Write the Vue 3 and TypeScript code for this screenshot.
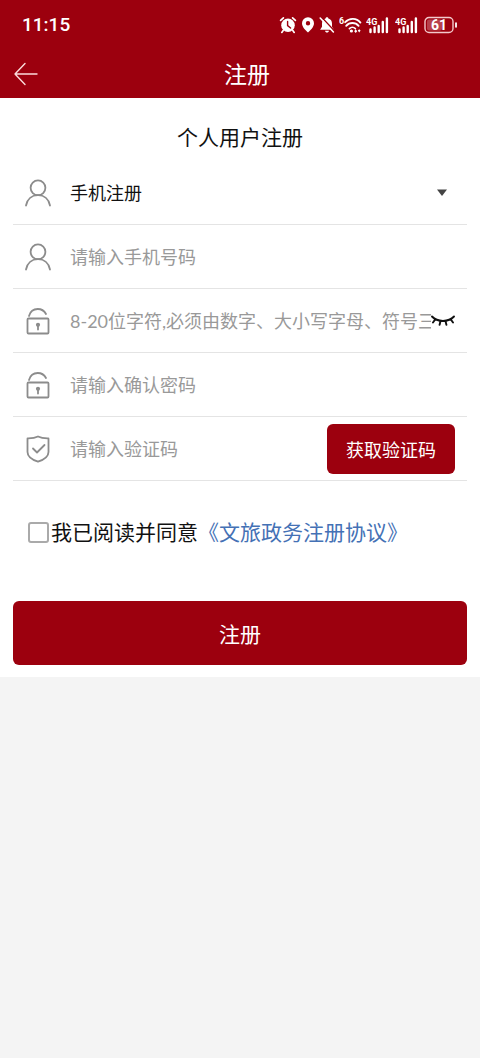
<script setup lang="ts">
import { ref } from 'vue'

const mode = ref('phone')
const phone = ref('')
const password = ref('')
const confirmation = ref('')
const code = ref('')
const agreed = ref(false)
const visible = ref(false)
</script>

<template>
  <div class="page">
    <header class="top">
      <div class="status">
        <span class="time">11:15</span>
        <div class="indicators">
          <svg width="18" height="18" viewBox="0 0 18 18" aria-hidden="true">
            <circle cx="9" cy="9.3" r="6.8" fill="#fff" />
            <path d="M1.600 4.400 4.400 1.800M16.400 4.400 13.600 1.800M4.200 14.600 2.800 16.400M13.800 14.600l1.400 1.800" stroke="#fff" stroke-width="1.700" stroke-linecap="round" />
            <path d="M8.600 5.400v4.200l3 2.400" fill="none" stroke="#9c000e" stroke-width="1.400" stroke-linecap="round" />
          </svg>
          <svg width="14" height="18" viewBox="0 0 14 18" aria-hidden="true">
            <path fill="#fff" fill-rule="evenodd" d="M7 1.200a6 6 0 0 0-6 6c0 4 4 7.300 6 9.300 2-2 6-5.300 6-9.300a6 6 0 0 0-6-6Zm0 3.800a2.200 2.200 0 1 1 0 4.400 2.200 2.200 0 0 1 0-4.400Z" />
          </svg>
          <svg width="16" height="18" viewBox="0 0 16 18" aria-hidden="true">
            <path fill="#fff" d="M8 1.300c.8 0 1.300.5 1.400 1.200 2.400.7 3.600 2.500 3.600 4.900v3.400l1.900 2.900H1.100L3 10.800V7.400c0-2.400 1.200-4.200 3.600-4.900.1-.7.600-1.200 1.400-1.200ZM6 14.700h4c-.2 1.200-1 1.800-2 1.800s-1.800-.6-2-1.800Z" />
            <path d="M2.600 1.200 16 15.600" stroke="#9c000e" stroke-width="1.500" />
            <path d="M1.200 2 14.400 16" stroke="#fff" stroke-width="1.600" stroke-linecap="round" />
          </svg>
          <svg width="23" height="18" viewBox="0 0 23 18" aria-hidden="true">
            <text x="0" y="7.500" class="mark">6</text>
            <path d="M6.200 6.200c4.200-4.600 11.400-4.400 15.200.4M7.200 9.800c3.200-3.700 9.200-3.700 12.400 0" fill="none" stroke="#fff" stroke-width="1.900" stroke-linecap="round" />
            <path d="M10.400 12.600c1.700-1.700 4.300-1.700 6 0" fill="none" stroke="#fff" stroke-width="1.600" stroke-linecap="round" />
            <circle cx="12.400" cy="15" r="1.600" fill="#fff" />
            <path d="m15.200 15.200 1.500-2 1.500 2-1.500 1.700ZM18.800 14.600l1.400-1.400 1.400 1.400-1.400 2Z" fill="#fff" />
          </svg>
          <svg v-for="sim in 2" :key="sim" width="25" height="18" viewBox="0 0 25 18" aria-hidden="true">
            <text x="0" y="8.500" class="mark">4G</text>
            <path d="M4.500 13.500V16M8.600 11.500V16M12.700 10V16M16.800 6V16M20.900 2.500V16" stroke="#fff" stroke-width="2.400" stroke-linecap="round" />
          </svg>
          <svg width="34" height="18" viewBox="0 0 34 18" aria-hidden="true">
            <rect x="1" y="1.500" width="28" height="15" rx="4" fill="none" stroke="#f3c9cc" stroke-width="1.400" />
            <rect x="3" y="3.500" width="15" height="11" rx="2" fill="#b8404b" />
            <path d="M32 7.200v3.600" stroke="#fff" stroke-width="1.800" stroke-linecap="round" />
            <text x="15" y="14" text-anchor="middle" class="charge">61</text>
          </svg>
        </div>
      </div>
      <nav class="bar">
        <button type="button" class="back" aria-label="返回">
          <svg width="24" height="24" viewBox="0 0 24 24" fill="none" stroke="#fbdcdc" stroke-width="1.400" stroke-linecap="round" stroke-linejoin="round">
            <path d="M23 12H1M11 1.500 1 12l10 10.500" />
          </svg>
        </button>
        <h1>注册</h1>
      </nav>
    </header>

    <form class="form" @submit.prevent>
      <h2>个人用户注册</h2>

      <div class="row">
        <svg class="icon" viewBox="0 0 28 28" aria-hidden="true"><circle cx="14" cy="8.800" r="7.400" /><path d="M2 26.500C3.200 20 8 16.200 14 16.200S24.800 20 26 26.500" /></svg>
        <div class="pick">
          <select v-model="mode" aria-label="注册方式">
            <option value="phone">手机注册</option>
          </select>
          <svg class="caret" width="10" height="7" viewBox="0 0 10 7" aria-hidden="true"><path d="M0 .5h10L5 7Z" fill="#444" /></svg>
        </div>
      </div>

      <div class="row">
        <svg class="icon" viewBox="0 0 28 28" aria-hidden="true"><circle cx="14" cy="8.800" r="7.400" /><path d="M2 26.500C3.200 20 8 16.200 14 16.200S24.800 20 26 26.500" /></svg>
        <input v-model="phone" type="tel" placeholder="请输入手机号码" aria-label="手机号码" />
      </div>

      <div class="row">
        <svg class="icon" viewBox="0 0 28 28" aria-hidden="true"><rect x="3.500" y="11.500" width="21" height="15" rx="1" /><path d="M5 9C6.200 4.800 9.600 2 13.700 2c3.600 0 6.600 1.900 8.300 5M14 18v4.500" /><circle cx="14" cy="17.800" r="1.200" class="dot" /></svg>
        <input v-model="password" :type="visible ? 'text' : 'password'" placeholder="8-20位字符,必须由数字、大小写字母、符号三种组成" aria-label="密码" />
        <button type="button" class="eye" aria-label="显示密码" @click="visible = !visible">
          <svg width="24" height="12" viewBox="0 0 24 12" fill="none" stroke="#111" stroke-width="1.900" stroke-linecap="round">
            <path d="M1 1.500C6.500 7.400 17.500 7.400 23 1.500M4.300 4.200 2 7.500M9.500 6 8.600 9.800M14.500 6l.9 3.800M19.700 4.200 22 7.500" />
          </svg>
        </button>
      </div>

      <div class="row">
        <svg class="icon" viewBox="0 0 28 28" aria-hidden="true"><rect x="3.500" y="11.500" width="21" height="15" rx="1" /><path d="M5 9C6.200 4.800 9.600 2 13.700 2c3.600 0 6.600 1.900 8.300 5M14 18v4.500" /><circle cx="14" cy="17.800" r="1.200" class="dot" /></svg>
        <input v-model="confirmation" type="password" placeholder="请输入确认密码" aria-label="确认密码" />
      </div>

      <div class="row">
        <svg class="icon" viewBox="0 0 28 28" aria-hidden="true"><path d="M14 1.500c2.800 1.500 6 2 10.500 1.900V17c0 4.200-4.800 7.800-10.500 9.700C8.300 24.800 3.500 21.200 3.500 17V3.400C8 3.500 11.200 3 14 1.500ZM9 13.500l4 4L20.500 10" /></svg>
        <input v-model="code" type="text" placeholder="请输入验证码" aria-label="验证码" />
        <button type="button" class="send">获取验证码</button>
      </div>

      <div class="agree">
        <input id="agree" v-model="agreed" type="checkbox" />
        <label for="agree">我已阅读并同意</label>
        <a href="#agreement">《文旅政务注册协议》</a>
      </div>

      <button type="submit" class="submit">注册</button>
    </form>
  </div>
</template>

<style>
body {
  background: #f4f4f4;
}
</style>

<style scoped>
.page,
.page * {
  box-sizing: border-box;
}
.page {
  font-family: Lato, "Noto Sans CJK SC", sans-serif;
  color: #111;
}
button,
input,
select {
  font: inherit;
  color: inherit;
  margin: 0;
  padding: 0;
  border: 0;
  background: none;
}
svg {
  display: block;
  flex: none;
}
.top {
  background: #9c000e;
  color: #fff;
}
.status {
  display: flex;
  align-items: center;
  justify-content: space-between;
  height: 50px;
  padding: 0 22px;
}
.time {
  font: 500 19px/24px Roboto, sans-serif;
}
.indicators {
  display: flex;
  align-items: center;
  gap: 4px;
}
.mark {
  font: 700 9px Roboto, sans-serif;
  fill: #fff;
}
.charge {
  font: 700 14px Roboto, sans-serif;
  fill: #fff;
}
.bar {
  display: grid;
  grid-template-columns: 40px 1fr 40px;
  align-items: center;
  height: 48px;
  padding-left: 14px;
}
.bar h1 {
  margin: 0;
  text-align: center;
  font-size: 23px;
  line-height: 32px;
  font-weight: 400;
}
.form {
  background: #fff;
  padding: 23px 13px 12px;
}
.form h2 {
  margin: 0 0 8px;
  text-align: center;
  font-size: 21px;
  line-height: 32px;
  font-weight: 400;
}
.row {
  display: flex;
  align-items: center;
  height: 64px;
  padding: 0 12px 0 11px;
  border-bottom: 1px solid #e4e4e4;
  font-size: 18px;
}
.icon {
  width: 28px;
  height: 28px;
  margin-right: 18px;
  fill: none;
  stroke: #8c8c8c;
  stroke-width: 1.800;
  stroke-linecap: round;
  stroke-linejoin: round;
}
.icon .dot {
  fill: #8c8c8c;
}
.row input {
  flex: 1;
  min-width: 0;
  height: 32px;
  outline: none;
}
.row input::placeholder {
  color: #999;
  opacity: 1;
}
.pick {
  flex: 1;
  display: flex;
  align-items: center;
  padding-right: 8px;
}
.pick select {
  flex: 1;
  height: 32px;
  appearance: none;
  outline: none;
}
.send {
  width: 128px;
  height: 50px;
  border-radius: 6px;
  background: #9c000e;
  color: #fff;
}
.agree {
  display: flex;
  align-items: center;
  margin-top: 35px;
  padding-left: 15px;
  font-size: 21px;
  line-height: 32px;
}
.agree input {
  width: 21px;
  height: 21px;
  margin-right: 2px;
  appearance: none;
  border: 2px solid #aaa;
  border-radius: 3px;
  background: #fff;
}
.agree input:checked {
  background: #9c000e;
}
.agree a {
  color: #4471b5;
  text-decoration: none;
}
.submit {
  display: block;
  width: 100%;
  height: 64px;
  margin-top: 53px;
  border-radius: 6px;
  background: #9c000e;
  color: #fff;
  font-size: 21px;
}
</style>
